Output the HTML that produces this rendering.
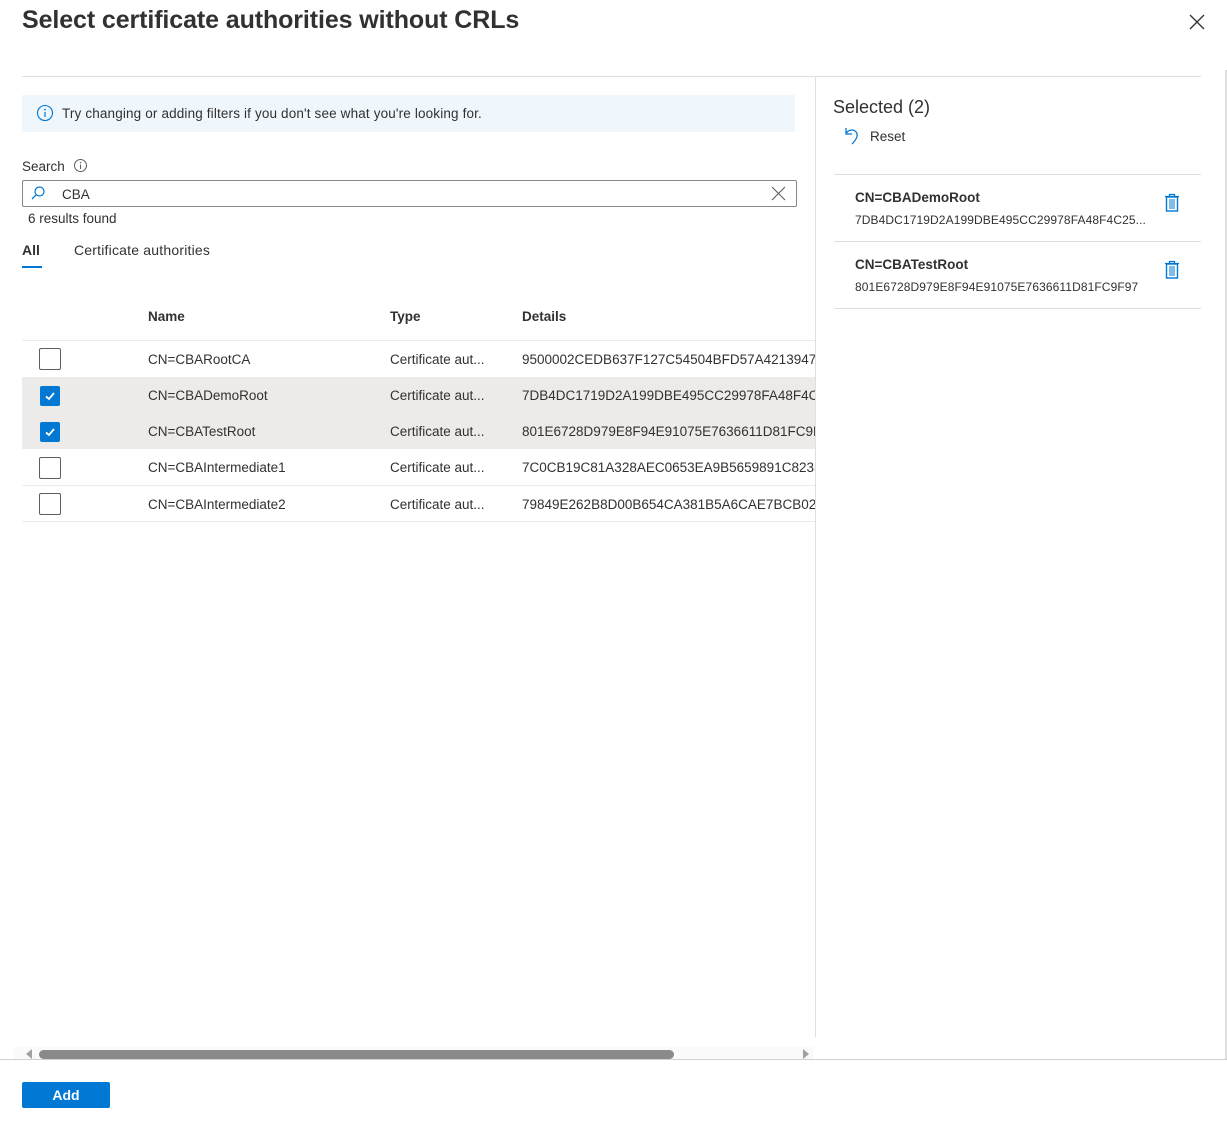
<!DOCTYPE html>
<html><head><meta charset="utf-8"><style>
*{box-sizing:border-box;margin:0;padding:0}
body{width:1227px;height:1124px;background:#fff;font-family:"Liberation Sans",sans-serif;color:#323130;position:relative;overflow:hidden;font-size:13.5px}
.a{position:absolute;white-space:nowrap}
.t{margin-top:1px}
.cb{position:absolute;left:39px;width:22px;height:22px;border:1px solid #605e5c;border-radius:2px;background:#fff}
.cbc{position:absolute;left:40px;width:20px;height:20px;background:#0078d4;border-radius:2px}
.hl{position:absolute;left:22px;width:793px;height:1px;background:#edebe9}
.row{position:absolute;left:22px;width:793px;height:36px}
</style></head><body>
<div class="a" style="left:22px;top:6px;font-size:25px;font-weight:bold;color:#323130;letter-spacing:-0.1px">Select certificate authorities without CRLs</div>
<svg class="a" style="left:1189px;top:14px" width="16" height="16"><path d="M1 1L15 15M15 1L1 15" stroke="#323130" stroke-width="1.3"/></svg>
<div class="a" style="left:22px;top:76px;width:1179px;height:1px;background:#e1dfdd"></div>
<div class="a" style="left:815px;top:77px;width:1px;height:960px;background:#e1dfdd"></div>
<div class="a" style="left:1225px;top:70px;width:2px;height:990px;background:#e1dfdd"></div>

<div class="a" style="left:22px;top:95px;width:773px;height:37px;background:#eff6fc"></div>
<svg class="a" style="left:36px;top:104px" width="18" height="18"><circle cx="9" cy="9" r="7.5" fill="none" stroke="#0078d4" stroke-width="1.1"/><path d="M9 8v5" stroke="#0078d4" stroke-width="1.2"/><circle cx="9" cy="5.6" r="0.9" fill="#0078d4"/></svg>
<div class="a" style="left:62px;top:106px;font-size:13.5px;letter-spacing:0.15px">Try changing or adding filters if you don't see what you're looking for.</div>

<div class="a" style="left:22px;top:159px">Search</div>
<svg class="a" style="left:73px;top:158px" width="15" height="15"><circle cx="7.5" cy="7.5" r="6" fill="none" stroke="#605e5c" stroke-width="1"/><path d="M7.5 6.5v4.5" stroke="#605e5c"/><circle cx="7.5" cy="4.6" r="0.7" fill="#605e5c"/></svg>
<div class="a" style="left:22px;top:180px;width:775px;height:27px;border:1px solid #8a8886;border-radius:2px"></div>
<svg class="a" style="left:30px;top:185px" width="16" height="16"><circle cx="9.5" cy="6.5" r="4.5" fill="none" stroke="#0078d4" stroke-width="1.2"/><path d="M6.3 9.7L2 14" stroke="#0078d4" stroke-width="1.3"/></svg>
<div class="a" style="left:62px;top:187px">CBA</div>
<svg class="a" style="left:771px;top:186px" width="15" height="15"><path d="M1 1L14 14M14 1L1 14" stroke="#605e5c" stroke-width="1.1"/></svg>
<div class="a" style="left:28px;top:211px">6 results found</div>
<div class="a" style="left:22px;top:242px;font-weight:bold;font-size:14px">All</div>
<div class="a" style="left:22px;top:266px;width:20px;height:2px;background:#0078d4"></div>
<div class="a" style="left:74px;top:242px;font-size:14px;letter-spacing:0.2px">Certificate authorities</div>

<div class="a" style="left:148px;top:309px;font-weight:bold">Name</div>
<div class="a" style="left:390px;top:309px;font-weight:bold">Type</div>
<div class="a" style="left:522px;top:309px;font-weight:bold">Details</div>
<div class="hl" style="top:340px"></div>
<div class="row" style="top:377px;height:72px;background:#edebe9"></div>
<div class="hl" style="top:485px"></div>
<div class="hl" style="top:521px"></div>

<div class="cb" style="top:348px"></div>
<div class="cbc" style="top:386px"></div><svg class="a" style="left:44px;top:390px" width="12" height="12"><path d="M2 6.5L5 9L10 3" stroke="#fff" stroke-width="1.8" fill="none"/></svg>
<div class="cbc" style="top:422px"></div><svg class="a" style="left:44px;top:426px" width="12" height="12"><path d="M2 6.5L5 9L10 3" stroke="#fff" stroke-width="1.8" fill="none"/></svg>
<div class="cb" style="top:457px"></div>
<div class="cb" style="top:493px"></div>

<div style="position:absolute;left:0;top:0;width:815px;height:530px;overflow:hidden">
<div class="a" style="left:148px;top:352px">CN=CBARootCA</div><div class="a" style="left:390px;top:352px">Certificate aut...</div><div class="a" style="left:522px;top:352px">9500002CEDB637F127C54504BFD57A42139475</div>
<div class="a" style="left:148px;top:388px">CN=CBADemoRoot</div><div class="a" style="left:390px;top:388px">Certificate aut...</div><div class="a" style="left:522px;top:388px">7DB4DC1719D2A199DBE495CC29978FA48F4C25</div>
<div class="a" style="left:148px;top:424px">CN=CBATestRoot</div><div class="a" style="left:390px;top:424px">Certificate aut...</div><div class="a" style="left:522px;top:424px">801E6728D979E8F94E91075E7636611D81FC9F97</div>
<div class="a" style="left:148px;top:460px">CN=CBAIntermediate1</div><div class="a" style="left:390px;top:460px">Certificate aut...</div><div class="a" style="left:522px;top:460px">7C0CB19C81A328AEC0653EA9B5659891C82355</div>
<div class="a" style="left:148px;top:497px">CN=CBAIntermediate2</div><div class="a" style="left:390px;top:497px">Certificate aut...</div><div class="a" style="left:522px;top:497px">79849E262B8D00B654CA381B5A6CAE7BCB0211</div>
</div>

<div class="a" style="left:833px;top:97px;font-size:18px">Selected (2)</div>
<svg class="a" style="left:842px;top:125px" width="20" height="22"><path d="M4 3v6h6" fill="none" stroke="#0078d4" stroke-width="1.3"/><path d="M4 8.5C7 4 12 4 14.5 7.5C16.5 11 14 15 10 19" fill="none" stroke="#0078d4" stroke-width="1.3"/></svg>
<div class="a" style="left:870px;top:129px">Reset</div>
<div class="a" style="left:834px;top:174px;width:367px;height:1px;background:#e1dfdd"></div>
<div class="a" style="left:855px;top:190px;font-size:13.5px;font-weight:bold">CN=CBADemoRoot</div>
<div class="a" style="left:855px;top:213px;font-size:12px;letter-spacing:0.1px">7DB4DC1719D2A199DBE495CC29978FA48F4C25...</div>
<svg class="a" style="left:1164px;top:193px" width="16" height="19"><path d="M1 3.5h14M5.5 3.5V1.5h5v2" fill="none" stroke="#0078d4" stroke-width="1.3"/><rect x="2.5" y="4" width="11" height="14" fill="none" stroke="#0078d4" stroke-width="1.4"/><path d="M6 6v10M8 6v10M10 6v10" stroke="#0078d4" stroke-width="1"/></svg>
<div class="a" style="left:834px;top:241px;width:367px;height:1px;background:#e1dfdd"></div>
<div class="a" style="left:855px;top:257px;font-size:13.5px;font-weight:bold">CN=CBATestRoot</div>
<div class="a" style="left:855px;top:280px;font-size:12px;letter-spacing:0.1px">801E6728D979E8F94E91075E7636611D81FC9F97</div>
<svg class="a" style="left:1164px;top:260px" width="16" height="19"><path d="M1 3.5h14M5.5 3.5V1.5h5v2" fill="none" stroke="#0078d4" stroke-width="1.3"/><rect x="2.5" y="4" width="11" height="14" fill="none" stroke="#0078d4" stroke-width="1.4"/><path d="M6 6v10M8 6v10M10 6v10" stroke="#0078d4" stroke-width="1"/></svg>
<div class="a" style="left:834px;top:308px;width:367px;height:1px;background:#e1dfdd"></div>

<div class="a" style="left:14px;top:1047px;width:800px;height:12px;background:#fafafa"></div>
<svg class="a" style="left:25px;top:1049px" width="8" height="10"><path d="M7 0v10L1 5z" fill="#a0a0a0"/></svg>
<div class="a" style="left:39px;top:1050px;width:635px;height:9px;background:#8a8a8a;border-radius:5px"></div>
<svg class="a" style="left:802px;top:1049px" width="8" height="10"><path d="M1 0v10L7 5z" fill="#a0a0a0"/></svg>
<div class="a" style="left:0;top:1059px;width:1227px;height:1px;background:#d2d0ce"></div>
<div class="a" style="left:22px;top:1082px;width:88px;height:26px;background:#0078d4;border-radius:2px;color:#fff;font-weight:bold;text-align:center;line-height:26px;font-size:14px">Add</div>
</body></html>
